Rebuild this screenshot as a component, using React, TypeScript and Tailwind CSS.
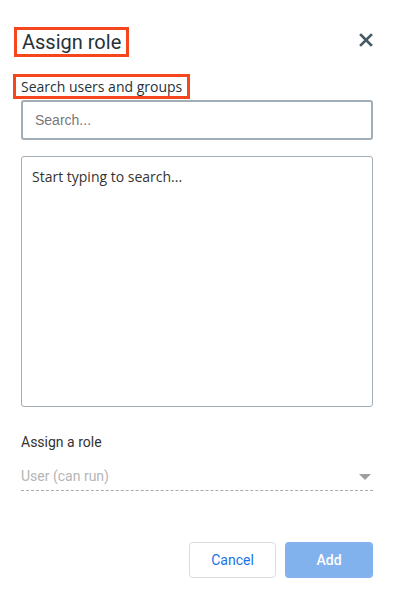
import React from "react";

export default function App() {
  return (
    <div className="w-[395px] h-[598px] bg-white relative" style={{ fontFamily: "Roboto, sans-serif" }}>
      <div className="pt-[27px] pl-[14px] pr-[22px] flex items-start justify-between">
        <div className="border-[3px] border-[#f5461d] h-[30px] px-[5px] flex items-center">
          <span className="text-[20px] text-[#263238] leading-none">Assign role</span>
        </div>
        <button className="mt-[6px] text-[#455a64]">
          <svg width="14" height="14" viewBox="0 0 14 14">
            <path d="M2 2 L12 12 M12 2 L2 12" stroke="currentColor" strokeWidth="2.6" strokeLinecap="square" />
          </svg>
        </button>
      </div>
      <div className="pl-[13px] mt-[17px]">
        <div className="inline-flex border-[3px] border-[#f5461d] h-[25px] px-[5px] items-center">
          <span className="text-[14px] text-[#263238] font-medium leading-none" style={{ fontFamily: "'Open Sans', sans-serif" }}>
            Search users and groups
          </span>
        </div>
      </div>
      <div className="pl-[21px] pr-[22px] mt-[1px] w-[395px]">
        <div className="h-[40px] border-2 border-[#a3adb5] rounded-[3px] flex items-center px-[12px]">
          <span className="text-[14px] text-[#777]" style={{ fontFamily: "'Liberation Sans', Arial, sans-serif" }}>Search...</span>
        </div>
        <div className="mt-[16px] h-[251px] border border-[#a3adb5] rounded-[3px] px-[10px] pt-[8px]">
          <span className="text-[14px] text-[#333]" style={{ fontFamily: "'Open Sans', sans-serif" }}>Start typing to search...</span>
        </div>
        <div className="mt-[25px] text-[14px] text-[#333]">Assign a role</div>
        <div className="mt-[13px] flex items-center justify-between border-b border-dashed border-[#aaa] pb-[3px]">
          <span className="text-[14px] text-[#b5b5b5]">User (can run)</span>
          <svg width="12" height="6" viewBox="0 0 12 6" className="mr-[2px]">
            <path d="M0 0 L12 0 L6 6 Z" fill="#9e9e9e" />
          </svg>
        </div>
        <div className="mt-[51px] flex justify-end gap-[9px]">
          <button className="w-[87px] h-[36px] border border-[#dcdcdc] rounded-[4px] text-[14px] text-[#1a73e8] bg-white">Cancel</button>
          <button className="w-[88px] h-[36px] rounded-[4px] text-[14px] text-white bg-[#82b2ee] font-medium">Add</button>
        </div>
      </div>
    </div>
  );
}
